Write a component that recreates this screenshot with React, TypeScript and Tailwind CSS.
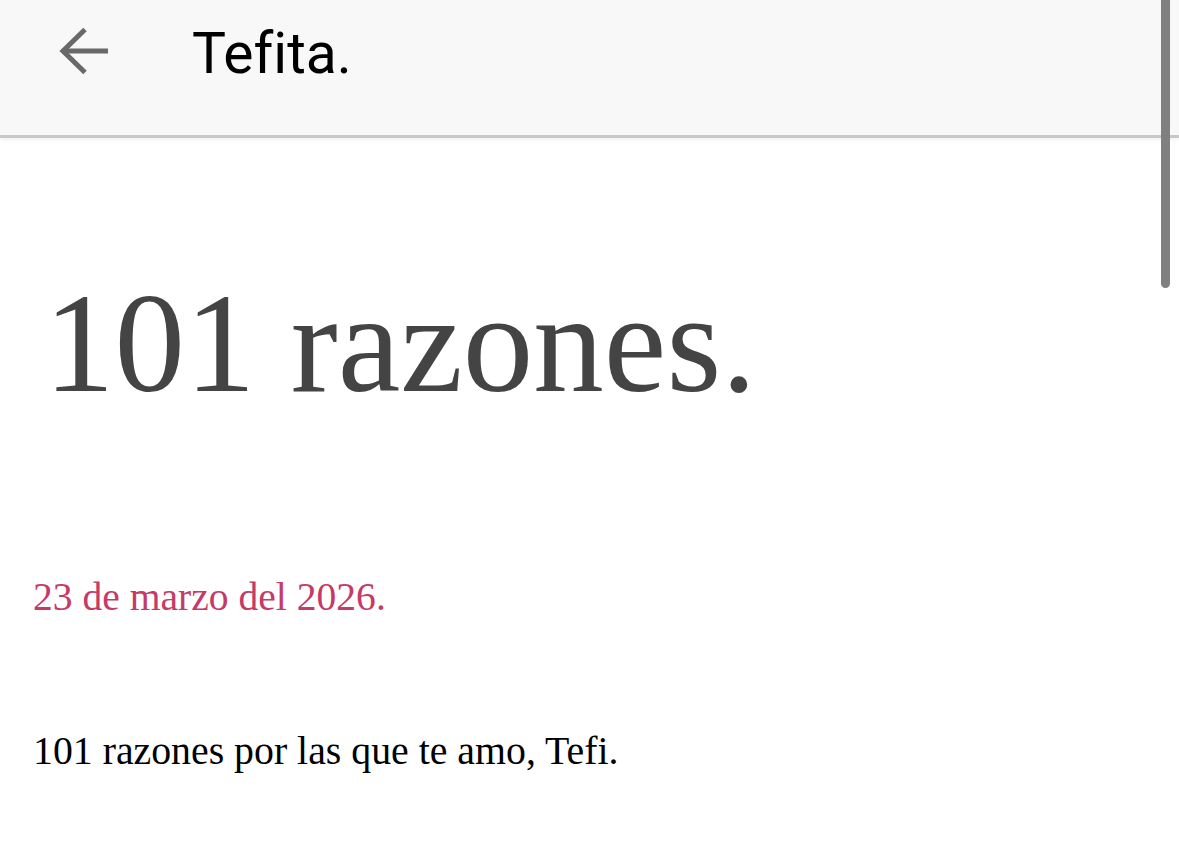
export default function App() {
  return (
    <div className="relative min-h-screen bg-white">
      {/* top bar */}
      <header className="flex h-[138px] items-start border-b-[3px] border-[#c8c8c8] bg-[#f8f8f8] pt-[25px] shadow-[0_2px_4px_rgba(0,0,0,0.06)]">
        <button className="ml-[58px] mt-[2px] h-[48px] w-[52px]" aria-label="Atrás">
          <svg width="52" height="48" viewBox="0 0 52 48" fill="none">
            <path d="M4 24H50" stroke="#696969" strokeWidth="5" />
            <path d="M27 2.5L5 24L27 45.5" stroke="#696969" strokeWidth="5" />
          </svg>
        </button>
        <h1 className="ml-[82px] text-[57px] leading-none text-black [font-variant-ligatures:none] font-['Roboto',sans-serif]">
          Tefita.
        </h1>
      </header>

      {/* post body */}
      <main className="pl-[33px] font-['Liberation_Serif','Times_New_Roman',serif]">
        <h2 className="ml-[11px] mt-[135px] text-[141px] leading-none font-normal text-[#444444]">101 razones.</h2>
        <p className="mt-[164px] text-[39.6px] leading-none text-[#c63a68]">23 de marzo del 2026.</p>
        <p className="mt-[114px] text-[39.8px] leading-none text-black">101 razones por las que te amo, Tefi.</p>
      </main>

      {/* scroll thumb */}
      <div className="absolute right-[9px] top-0 h-[288px] w-[9px] rounded-b-full bg-[#808080]" />
    </div>
  );
}
